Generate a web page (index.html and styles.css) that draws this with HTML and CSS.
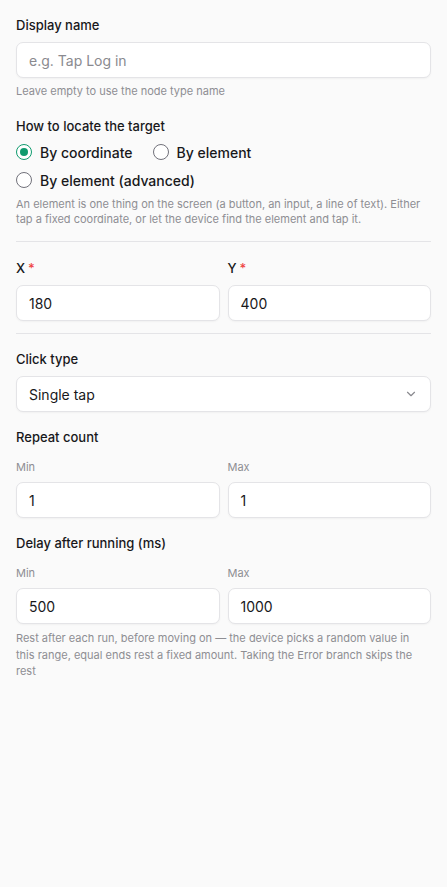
FILE: index.html
```html
<!DOCTYPE html>
<html>
<head>
<meta charset="utf-8">
<link rel="stylesheet" href="styles.css">
</head>
<body>
<div class="panel">
  <div class="field">
    <div class="label">Display name</div>
    <div class="input placeholder">e.g. Tap Log in</div>
    <div class="help">Leave empty to use the node type name</div>
  </div>

  <div class="field locate">
    <div class="label">How to locate the target</div>
    <div class="radios">
      <div class="radio-row">
        <div class="radio checked"><span class="dot"></span><span>By coordinate</span></div>
        <div class="radio"><span class="dot"></span><span>By element</span></div>
      </div>
      <div class="radio-row">
        <div class="radio"><span class="dot"></span><span>By element (advanced)</span></div>
      </div>
    </div>
    <div class="help desc">An element is one thing on the screen (a button, an input, a line of text). Either tap a fixed coordinate, or let the device find the element and tap it.</div>
  </div>

  <hr class="divider">

  <div class="grid2 xy">
    <div class="field">
      <div class="label">X<span class="req">*</span></div>
      <div class="input">180</div>
    </div>
    <div class="field">
      <div class="label">Y<span class="req">*</span></div>
      <div class="input">400</div>
    </div>
  </div>

  <hr class="divider">

  <div class="field click">
    <div class="label">Click type</div>
    <div class="input select">
      <span>Single tap</span>
      <svg width="14" height="14" viewBox="0 0 24 24" fill="none" stroke="#8a8a8f" stroke-width="2" stroke-linecap="round" stroke-linejoin="round"><path d="m6 9 6 6 6-6"/></svg>
    </div>
  </div>

  <div class="field range">
    <div class="label">Repeat count</div>
    <div class="grid2">
      <div>
        <div class="sublabel">Min</div>
        <div class="input">1</div>
      </div>
      <div>
        <div class="sublabel">Max</div>
        <div class="input">1</div>
      </div>
    </div>
  </div>

  <div class="field range">
    <div class="label">Delay after running (ms)</div>
    <div class="grid2">
      <div>
        <div class="sublabel">Min</div>
        <div class="input">500</div>
      </div>
      <div>
        <div class="sublabel">Max</div>
        <div class="input">1000</div>
      </div>
    </div>
    <div class="help long">Rest after each run, before moving on — the device picks a random value in this range, equal ends rest a fixed amount. Taking the Error branch skips the rest</div>
  </div>
</div>
</body>
</html>
```

FILE: styles.css
```css
* { box-sizing: border-box; }
html, body {
  margin: 0;
  padding: 0;
  background: #fafafa;
  font-family: Inter, "Noto Sans", sans-serif;
  color: #18181b;
}
.panel {
  padding: 16px 16px 40px 16px;
  display: flex;
  flex-direction: column;
}
.field { display: flex; flex-direction: column; }
.label {
  font-size: 13px;
  line-height: 18px;
  font-weight: 500;
  margin-bottom: 8px;
}
.locate .label { margin-bottom: 7px; }
.req { color: #ef4444; margin-left: 3px; }
.input {
  height: 36px;
  background: #fff;
  border: 1px solid #e4e4e7;
  border-radius: 7px;
  box-shadow: 0 1px 2px rgba(0,0,0,0.04);
  padding: 0 12px;
  display: flex;
  align-items: center;
  font-size: 14px;
  color: #18181b;
}
.input.placeholder { color: #8a8a8f; }
.select { justify-content: space-between; padding-right: 12px; }
.help {
  font-size: 11px;
  line-height: 15px;
  color: #8e8e93;
  margin-top: 6px;
}
.locate { margin-top: 18px; }
.radios { display: flex; flex-direction: column; gap: 8px; }
.radio-row { display: flex; gap: 20px; height: 20px; align-items: center; }
.radio {
  display: flex;
  align-items: center;
  gap: 8px;
  font-size: 14px;
  font-weight: 500;
}
.dot {
  width: 16px;
  height: 16px;
  border-radius: 50%;
  border: 1px solid #71717a;
  background: #fff;
  display: inline-block;
  position: relative;
}
.radio.checked .dot {
  border: 1.5px solid #0f9b6e;
}
.radio.checked .dot::after {
  content: "";
  position: absolute;
  left: 2.5px; top: 2.5px;
  width: 8px; height: 8px;
  border-radius: 50%;
  background: #0f9b6e;
}
.desc { margin-top: 7px; }
.divider {
  border: none;
  border-top: 1px solid #e4e4e7;
  margin: 14px 0 0 0;
  height: 0;
}
.grid2 {
  display: grid;
  grid-template-columns: 1fr 1fr;
  gap: 8px;
}
.xy { margin-top: 17px; }
.xy + .divider { margin-top: 12px; }
.click { margin-top: 16px; }
.range { margin-top: 16px; }
.range .label { margin-bottom: 14px; }
.sublabel {
  font-size: 11px;
  line-height: 15px;
  color: #8e8e93;
  margin-bottom: 7px;
}
.help.long { line-height: 16.5px; margin-top: 6px; }
```
